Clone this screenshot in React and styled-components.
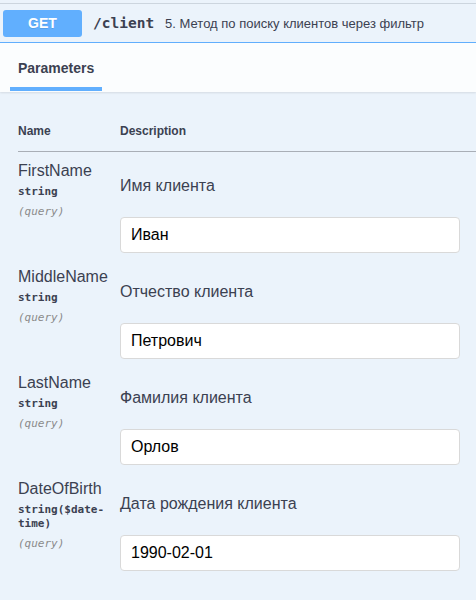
import React from 'react'
import styled, { createGlobalStyle } from 'styled-components'

const params = [
    { name: 'FirstName', type: 'string', desc: 'Имя клиента', value: 'Иван' },
    { name: 'MiddleName', type: 'string', desc: 'Отчество клиента', value: 'Петрович' },
    { name: 'LastName', type: 'string', desc: 'Фамилия клиента', value: 'Орлов' },
    { name: 'DateOfBirth', type: 'string($date-time)', desc: 'Дата рождения клиента', value: '1990-02-01' },
]

export default function App() {
    return (
        <>
            <Global />
            <Page>
                <TopEdge />
                <Summary>
                    <Method>GET</Method>
                    <Path>/client</Path>
                    <SummaryDesc>5. Метод по поиску клиентов через фильтр</SummaryDesc>
                </Summary>
                <SectionHeader>
                    <Tab>Parameters</Tab>
                </SectionHeader>
                <Table>
                    <HeadRow>
                        <NameCol>Name</NameCol>
                        <div>Description</div>
                    </HeadRow>
                    {params.map(p => (
                        <Row key={p.name}>
                            <NameCol>
                                <ParamName>{p.name}</ParamName>
                                <ParamType>{p.type}</ParamType>
                                <ParamIn>(query)</ParamIn>
                            </NameCol>
                            <DescCol>
                                <ParamDesc>{p.desc}</ParamDesc>
                                <Input defaultValue={p.value} />
                            </DescCol>
                        </Row>
                    ))}
                </Table>
            </Page>
        </>
    )
}

const mono = `'DejaVu Sans Mono', 'Liberation Mono', monospace`

const Global = createGlobalStyle`
    html, body {
        margin: 0;
        background: #ebf3fb;
    }
    body {
        font-family: 'Liberation Sans', Arial, sans-serif;
        color: #3b4151;
    }
`
const Page = styled.div`
    width: 476px;
    height: 600px;
    overflow: hidden;
    background: #ebf3fb;
`
const TopEdge = styled.div`
    height: 3px;
    border-bottom: 1px solid #ccd5de;
`
const Summary = styled.div`
    display: flex;
    align-items: center;
    height: 38px;
    padding: 0 3px;
    border-bottom: 1px solid #61affe;
`
const Method = styled.div`
    width: 79px;
    height: 27px;
    line-height: 27px;
    text-align: center;
    border-radius: 3px;
    background: #61affe;
    color: #fff;
    font-size: 14px;
    font-weight: 700;
    text-shadow: 0 1px 0 rgba(0,0,0,.1);
`
const Path = styled.span`
    margin-left: 11px;
    font-family: ${mono};
    font-size: 14.5px;
    font-weight: 700;
    color: #3b4151;
`
const SummaryDesc = styled.span`
    margin-left: 11px;
    font-size: 13px;
    color: #3b4151;
`
const SectionHeader = styled.div`
    height: 49px;
    background: rgba(255,255,255,.8);
    box-shadow: 0 1px 2px rgba(0,0,0,.1);
`
const Tab = styled.div`
    width: 76px;
    margin-left: 10px;
    padding: 17px 8px 11px;
    line-height: 16px;
    font-size: 14px;
    font-weight: 700;
    border-bottom: 4px solid #61affe;
`
const Table = styled.div`
    padding: 32px 0 0 18px;
`
const HeadRow = styled.div`
    display: flex;
    padding-bottom: 13px;
    border-bottom: 1px solid #a9aeb6;
    font-size: 12px;
    line-height: 14px;
    font-weight: 700;
`
const Row = styled.div`
    display: flex;
    height: 106px;
    box-sizing: border-box;
    padding-top: 10px;
`
const NameCol = styled.div`
    width: 102px;
    flex-shrink: 0;
`
const ParamName = styled.div`
    font-size: 16px;
    line-height: 18px;
`
const ParamType = styled.div`
    padding: 5px 0;
    font-family: ${mono};
    font-size: 11px;
    line-height: 14px;
    font-weight: 700;
    color: #3b4151;
    overflow-wrap: anywhere;
`
const ParamIn = styled.div`
    padding-top: 1px;
    font-family: ${mono};
    font-size: 11px;
    line-height: 14px;
    font-style: italic;
    color: #8a8a8a;
`
const DescCol = styled.div`
    display: flex;
    flex-direction: column;
`
const ParamDesc = styled.div`
    margin: 15px 0 22px;
    font-size: 16px;
    line-height: 18px;
`
const Input = styled.input`
    box-sizing: border-box;
    width: 340px;
    height: 36px;
    padding: 0 10px;
    border: 1px solid #d9d9d9;
    border-radius: 4px;
    background: #fff;
    font-family: 'Liberation Sans', Arial, sans-serif;
    font-size: 16px;
    color: #000;
    outline: none;
`
